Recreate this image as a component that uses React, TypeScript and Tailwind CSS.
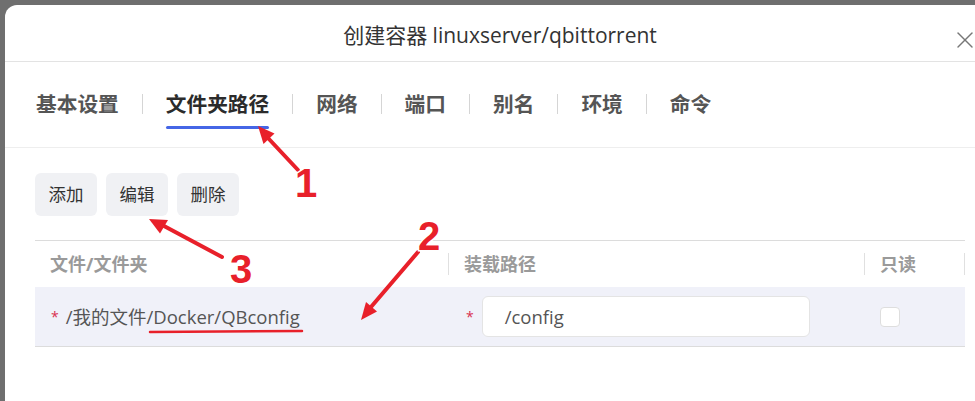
import { X } from 'lucide-react'

const tabs = ['基本设置', '文件夹路径', '网络', '端口', '别名', '环境', '命令']

const font = { fontFamily: '"Open Sans", "Noto Sans CJK SC", sans-serif' }

function Annotations() {
  // red hand-drawn marks laid over the dialog
  return (
    <svg className="pointer-events-none absolute inset-0" width={975} height={401}>
      <g stroke="#e8202a" strokeWidth={4} strokeLinecap="round" fill="#e8202a">
        <line x1={298} y1={170} x2={268} y2={138} />
        <polygon points="258,126 274.5,133.5 263.5,144" stroke="none" />
        <line x1={222} y1={257} x2={164} y2={226} />
        <polygon points="149,219 168,220 160,233.5" stroke="none" />
        <line x1={418} y1={252} x2={371} y2={307} />
        <polygon points="361,320 377,311.5 366,302" stroke="none" />
      </g>
      <line x1={150} y1={332} x2={302} y2={331} stroke="#e8202a" strokeWidth={2.5} strokeLinecap="round" />
      <g
        fill="#e8202a"
        stroke="#fff"
        strokeWidth={3}
        fontWeight={700}
        fontSize={40}
        fontFamily='"Liberation Sans", Arial, sans-serif'
        style={{ paintOrder: 'stroke' }}
        textAnchor="middle"
      >
        <text x={306} y={197}>1</text>
        <text x={429} y={250}>2</text>
        <text x={241} y={283}>3</text>
      </g>
    </svg>
  )
}

export default function App() {
  return (
    <div className="relative h-[401px] w-[975px] overflow-hidden bg-[#6f6f6f] pl-[5px] pt-[5px]" style={font}>
      <div className="h-[420px] w-[990px] rounded-tl-[12px] bg-white">
        {/* header */}
        <div className="relative flex h-[57px] items-center justify-center border-b border-[#e3e3e3] pt-[6px]">
          <span className="text-[21px] text-[#333]">创建容器 linuxserver/qbittorrent</span>
          <X className="absolute right-[16px] top-[21px] h-[28px] w-[28px] text-[#777]" strokeWidth={1.2} />
        </div>

        {/* tabs */}
        <div className="flex h-[86px] items-center border-b border-[#eeeeee] pl-[31px]">
          {tabs.map((t, i) => (
            <div key={t} className="flex items-center">
              {i > 0 && <span className="mx-[23px] h-[20px] w-px bg-[#d5d5d5]" />}
              <div className="relative">
                <span
                  className={
                    i === 1
                      ? 'text-[20.7px] font-bold text-[#2b2b2b]'
                      : 'text-[20.7px] font-bold text-[#555]'
                  }
                >
                  {t}
                </span>
                {i === 1 && <span className="absolute left-0 right-0 top-[37px] h-[3px] rounded bg-[#4566e6]" />}
              </div>
            </div>
          ))}
        </div>

        <div className="pl-[30px] pr-[25px]">
          {/* toolbar */}
          <div className="mt-[25px] flex gap-[9px]">
            {['添加', '编辑', '删除'].map((b) => (
              <button key={b} className="h-[43px] w-[62px] rounded-[6px] bg-[#f0f1f4] text-[17.5px] text-[#333]">
                {b}
              </button>
            ))}
          </div>

          {/* table */}
          <div className="mt-[24px] w-[930px]">
            <div className="flex h-[47px] items-center border-t border-[#dcdcdc] text-[18px] font-bold text-[#9a9a9a]">
              <div className="flex w-[414px] items-center justify-between">
                <span className="pl-[15px]">文件/文件夹</span>
                <span className="h-[22px] w-px bg-[#e0e0e0]" />
              </div>
              <div className="flex w-[416px] items-center justify-between">
                <span className="pl-[15px]">装载路径</span>
                <span className="h-[22px] w-px bg-[#e0e0e0]" />
              </div>
              <div className="flex w-[100px] items-center justify-between">
                <span className="pl-[15px]">只读</span>
                <span className="h-[22px] w-px bg-[#e0e0e0]" />
              </div>
            </div>
            <div className="flex h-[60px] items-center border-b border-[#dcdcdc] bg-[#f0f1f9] text-[18.5px] text-[#555]">
              <div className="flex w-[414px] items-center pl-[16px]">
                <span className="mr-[7px] text-[14px] text-[#d9304f]">*</span>
                <span>/我的文件/Docker/QBconfig</span>
              </div>
              <div className="flex w-[416px] items-center pl-[17px]">
                <span className="mr-[8px] text-[14px] text-[#d9304f]">*</span>
                <div className="flex h-[41px] w-[328px] items-center rounded-[6px] border border-[#e4e4e4] bg-white pl-[22px]">
                  /config
                </div>
              </div>
              <div className="flex w-[100px] items-center pl-[15px]">
                <span className="h-[20px] w-[20px] rounded-[4px] border border-[#dedede] bg-white" />
              </div>
            </div>
          </div>
        </div>
      </div>
      <Annotations />
    </div>
  )
}
